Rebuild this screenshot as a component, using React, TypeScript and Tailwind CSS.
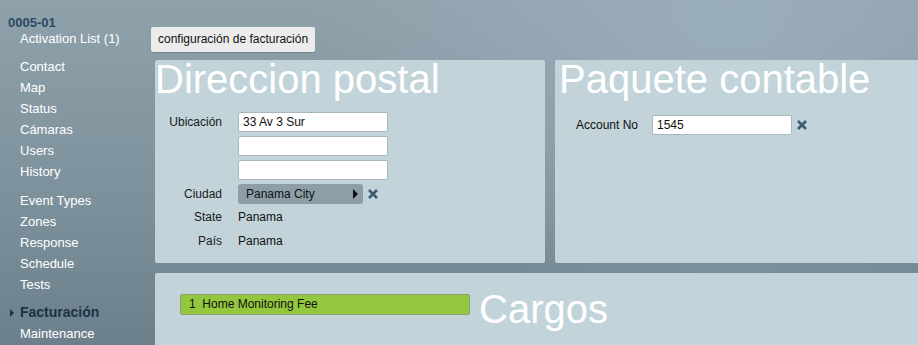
import React from "react";

const nav1 = ["Contact", "Map", "Status", "Cámaras", "Users", "History"];
const nav2 = ["Event Types", "Zones", "Response", "Schedule", "Tests"];

function CloseX() {
  return (
    <svg width="12" height="12" viewBox="0 0 12 12" className="shrink-0">
      <path d="M2 2 L10 10 M10 2 L2 10" stroke="#3d5a70" strokeWidth="2.6" strokeLinecap="butt" />
    </svg>
  );
}

function Field({ label, children }: { label: string; children: React.ReactNode }) {
  return (
    <div className="flex items-center">
      <div className="w-[69px] text-right pr-[16px] text-[12px] text-[#1a1a1a]">{label}</div>
      {children}
    </div>
  );
}

function Input({ value = "", width = "w-[150px]" }: { value?: string; width?: string }) {
  return (
    <div className={`${width} h-[20px] bg-white border border-[#a9b7bf] rounded-[2px] px-[4px] text-[12px] leading-[18px] text-[#111]`}>
      {value}
    </div>
  );
}

export default function App() {
  return (
    <div
      className="w-[918px] h-[345px] overflow-hidden flex font-['Liberation_Sans',Arial,sans-serif] bg-[radial-gradient(ellipse_420px_300px_at_730px_20px,#9aadba,transparent),linear-gradient(180deg,#8fa2ab_0%,#7c909b_60%,#6c808c_100%)]"
    >
      {/* sidebar */}
      <div className="w-[155px] shrink-0 pt-[15px] pl-[8px]">
        <div className="text-[13px] font-bold text-[#2c4a63] leading-[15px]">0005-01</div>
        <div className="pl-[12px] text-[13px] text-white leading-[21px]">
          <div className="leading-[17px]">Activation List (1)</div>
          <div className="mt-[9px]">
            {nav1.map((n) => (
              <div key={n}>{n}</div>
            ))}
          </div>
          <div className="mt-[8px]">
            {nav2.map((n) => (
              <div key={n}>{n}</div>
            ))}
          </div>
          <div className="mt-[7px] relative font-bold text-[#1d3246] text-[14px]">
            <span className="absolute left-[-10px] top-[7px] w-0 h-0 border-y-[4px] border-y-transparent border-l-[4px] border-l-[#1d3246]" />
            Facturación
          </div>
          <div>Maintenance</div>
        </div>
      </div>

      {/* main */}
      <div className="flex-1 flex flex-col">
        <div className="h-[60px] pt-[26px]">
          <div className="ml-[-4px] inline-block h-[25px] px-[7px] bg-[#ececec] rounded-[2px] text-[12px] leading-[25px] text-[#111] shadow-[0_1px_1px_rgba(0,0,0,0.15)]">
            configuración de facturación
          </div>
        </div>
        <div className="flex gap-[10px]">
          <div className="w-[390px] h-[203px] bg-[#c2d4da] rounded-[2px]">
            <div className="text-white text-[40px] leading-[40px] mt-[-1px]">Direccion postal</div>
            <div className="mt-[13px] pl-[14px] flex flex-col gap-[4px]">
              <Field label="Ubicación">
                <Input value="33 Av 3 Sur" />
              </Field>
              <Field label="">
                <Input />
              </Field>
              <Field label="">
                <Input />
              </Field>
              <Field label="Ciudad">
                <div className="w-[125px] h-[20px] bg-[#8d9ea8] rounded-[3px] pl-[8px] pr-[5px] flex items-center justify-between text-[12px] text-[#111]">
                  <span>Panama City</span>
                  <span className="w-0 h-0 border-y-[5px] border-y-transparent border-l-[5px] border-l-[#111]" />
                </div>
                <span className="ml-[4px]">
                  <CloseX />
                </span>
              </Field>
              <div className="flex flex-col gap-[6px]">
                <Field label="State">
                  <span className="text-[12px] text-[#111]">Panama</span>
                </Field>
                <Field label="País">
                  <span className="text-[12px] text-[#111]">Panama</span>
                </Field>
              </div>
            </div>
          </div>
          <div className="flex-1 h-[203px] bg-[#c2d4da] rounded-l-[2px]">
            <div className="text-white text-[40px] leading-[40px] pl-[4px] mt-[-1px]">Paquete contable</div>
            <div className="mt-[16px] pl-[21px] flex items-center">
              <span className="w-[76px] text-[12px] text-[#111]">Account No</span>
              <Input value="1545" width="w-[140px]" />
              <span className="ml-[4px]">
                <CloseX />
              </span>
            </div>
          </div>
        </div>
        <div className="mt-[10px] flex-1 bg-[#c2d4da] rounded-tl-[2px] flex items-start pl-[25px] pt-[21px]">
          <div className="w-[290px] h-[21px] bg-[#93c83e] border border-[#8aa07a] rounded-[2px] pl-[8px] text-[12px] leading-[19px] text-[#111]">
            1&nbsp;&nbsp;Home Monitoring Fee
          </div>
          <div className="ml-[9px] mt-[-5px] text-white text-[40px] leading-[40px]">Cargos</div>
        </div>
      </div>
    </div>
  );
}
